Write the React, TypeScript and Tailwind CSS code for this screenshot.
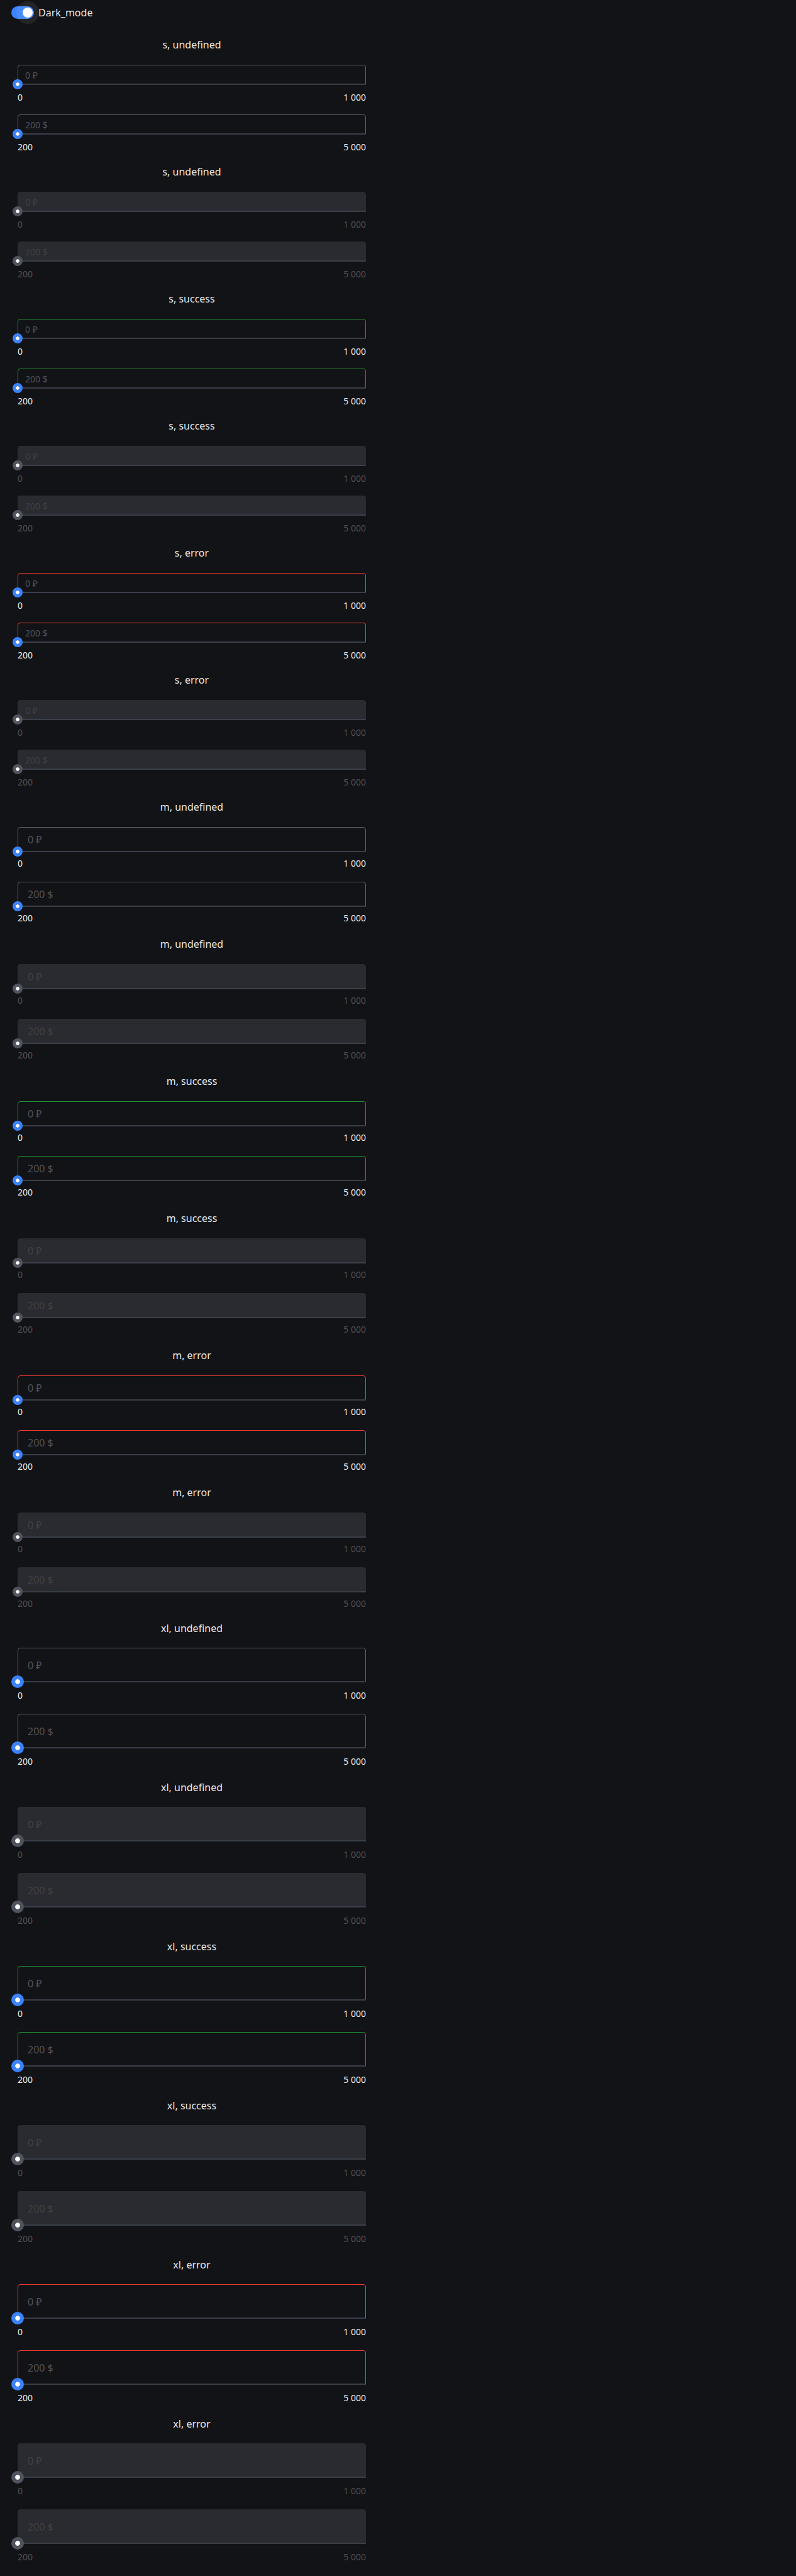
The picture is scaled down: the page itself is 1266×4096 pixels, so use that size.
import React, { useState } from 'react';

type Size = 's' | 'm' | 'xl';
type Status = 'undefined' | 'success' | 'error';

const sizes: Size[] = ['s', 'm', 'xl'];
const statuses: Status[] = ['undefined', 'success', 'error'];

const fieldHeight: Record<Size, string> = {
  s: 'h-8 rounded-t px-[11px] text-sm',
  m: 'h-10 rounded-t px-[15px] text-base',
  xl: 'h-[55px] rounded-t px-[15px] text-base',
};

const limitsGap: Record<Size, string> = { s: 'mt-2.5', m: 'mt-2', xl: 'mt-[11px]' };
const stackGap: Record<Size, string> = { s: 'gap-[17px]', m: 'gap-[19px]', xl: 'gap-[19px]' };
const titleGap: Record<Size, string> = { s: 'mb-5', m: 'mb-5', xl: 'mb-[19px]' };

const statusBorder: Record<Status, string> = {
  undefined: 'border-[#60616b]',
  success: 'border-[#1f9136]',
  error: 'border-[#f03a36]',
};

const rangeSize: Record<Size, string> = {
  s: '-bottom-[7px] -left-2 h-4 w-[calc(100%+16px)] [&::-webkit-slider-thumb]:size-4 [&::-webkit-slider-thumb]:border-5',
  m: '-bottom-[7px] -left-2 h-4 w-[calc(100%+16px)] [&::-webkit-slider-thumb]:size-4 [&::-webkit-slider-thumb]:border-5',
  xl: '-bottom-[9px] -left-2.5 h-5 w-[calc(100%+20px)] [&::-webkit-slider-thumb]:size-5 [&::-webkit-slider-thumb]:border-6',
};

interface SliderInputProps {
  size: Size;
  status: Status;
  disabled: boolean;
  min: number;
  max: number;
  unit: string;
}

const format = (n: number) => String(n).replace(/\B(?=(\d{3})+$)/g, ' ');

function SliderInput({ size, status, disabled, min, max, unit }: SliderInputProps) {
  const [text, setText] = useState('');
  const [value, setValue] = useState(min);
  const onText = (e: React.ChangeEvent<HTMLInputElement>) => {
    setText(e.target.value);
    const n = parseInt(e.target.value, 10);
    if (!Number.isNaN(n)) setValue(Math.min(max, Math.max(min, n)));
  };
  const onRange = (e: React.ChangeEvent<HTMLInputElement>) => {
    setValue(Number(e.target.value));
    setText(e.target.value);
  };
  return (
    <div>
      <div className="relative">
        <input
          type="text"
          aria-label={`Amount, ${unit}`}
          placeholder={`${min} ${unit}`}
          value={text}
          onChange={onText}
          disabled={disabled}
          className={`block w-full border text-[#e7e8ea] outline-none ${fieldHeight[size]} ${
            disabled
              ? 'border-[#2a2b30] bg-[#2a2b30] placeholder:text-[#3f4045]'
              : `bg-transparent placeholder:text-[#515258] ${statusBorder[status]}`
          }`}
        />
        <div className="absolute inset-x-0 bottom-0 h-0.5 bg-[#393f49]" />
        <input
          type="range"
          aria-label={`Amount slider, ${unit}`}
          min={min}
          max={max}
          value={value}
          onChange={onRange}
          disabled={disabled}
          className={`absolute appearance-none bg-transparent [&::-webkit-slider-thumb]:appearance-none [&::-webkit-slider-thumb]:rounded-full [&::-webkit-slider-thumb]:bg-white [&::-webkit-slider-thumb]:bg-clip-padding ${
            rangeSize[size]
          } ${
            disabled
              ? '[&::-webkit-slider-thumb]:border-[#50545f]'
              : '[&::-webkit-slider-thumb]:border-[#3a83ff]'
          }`}
        />
      </div>
      <div
        className={`flex justify-between text-sm leading-5 ${limitsGap[size]} ${
          disabled ? 'text-[#505158]' : 'text-[#eeeff0]'
        }`}
      >
        <span>{format(min)}</span>
        <span>{format(max)}</span>
      </div>
    </div>
  );
}

function Example({ size, status, disabled }: { size: Size; status: Status; disabled: boolean }) {
  return (
    <section>
      <h2 className={`text-center text-base leading-6 ${titleGap[size]}`}>
        {size}, {status}
      </h2>
      <div className={`flex flex-col ${stackGap[size]}`}>
        <SliderInput size={size} status={status} disabled={disabled} min={0} max={1000} unit="₽" />
        <SliderInput size={size} status={status} disabled={disabled} min={200} max={5000} unit="$" />
      </div>
    </section>
  );
}

export default function App() {
  const [dark, setDark] = useState(true);
  return (
    <main className="min-h-screen bg-[#121316] font-['Noto_Sans',sans-serif] text-[#e7e8ea]">
      <label className="flex h-10 w-fit items-center gap-[7px] pl-[18px] text-base">
        <span className="relative flex h-5 w-9">
          <input
            type="checkbox"
            role="switch"
            checked={dark}
            onChange={(e) => setDark(e.target.checked)}
            className="peer h-5 w-9 appearance-none rounded-full bg-[#50545f] checked:bg-[#3a83ff]"
          />
          <span className="pointer-events-none absolute -top-2 -left-2 flex size-9 items-center justify-center rounded-full bg-white/7 peer-checked:left-2">
            <span className="size-4 rounded-full bg-white" />
          </span>
        </span>
        Dark_mode
      </label>
      <div className="ml-7 flex w-[44%] max-w-[554px] flex-col gap-[17px] pt-[19px]">
        {sizes.map((size) => (
          <div key={size} className={`flex flex-col ${stackGap[size]}`}>
            {statuses.map((status) =>
              [false, true].map((disabled) => (
                <Example key={`${status}-${disabled}`} size={size} status={status} disabled={disabled} />
              )),
            )}
          </div>
        ))}
      </div>
    </main>
  );
}
